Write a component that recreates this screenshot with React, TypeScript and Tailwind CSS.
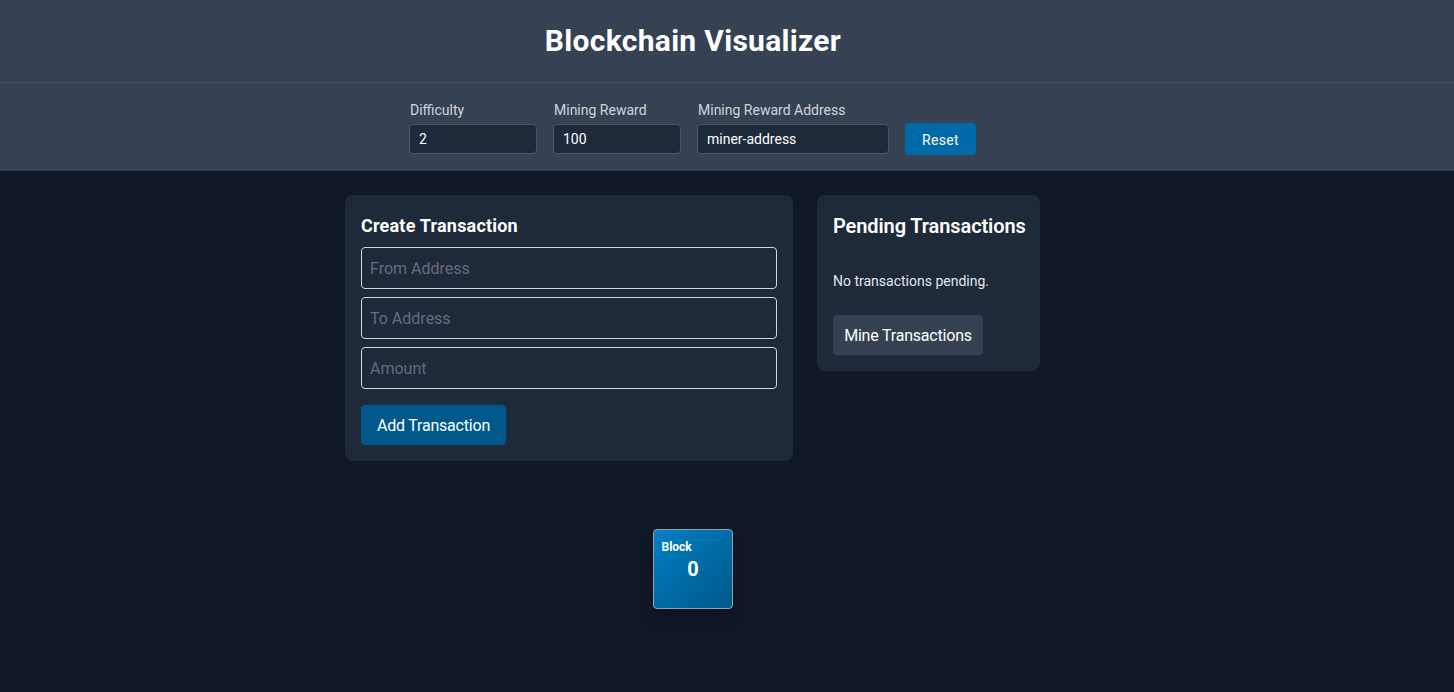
export default function App() {
  const font = "font-['Roboto','Noto_Sans',sans-serif]";
  return (
    <div className={`min-h-[692px] bg-gray-900 text-white ${font} overflow-hidden`}>
      <header className="bg-gray-700 border-b border-gray-600 h-[83px] w-full">
        <div className="w-[1386px] flex justify-center pt-[23px]">
          <h1 className="text-[30px] leading-9 font-bold tracking-[0.3px]">Blockchain Visualizer</h1>
        </div>
      </header>
      <div className="bg-gray-700 h-[88px] w-full">
        <div className="w-[1385px] flex justify-center items-end gap-4 pt-[17px]">
          <label className="flex flex-col gap-1 text-sm leading-5 text-gray-300">
            <span className="pl-px">Difficulty</span>
            <input readOnly value="2" className="w-32 h-[30px] px-[9px] text-sm text-white bg-gray-800 border border-gray-600 rounded-[4px] outline-none" />
          </label>
          <label className="flex flex-col gap-1 text-sm leading-5 text-gray-300">
            <span className="pl-px">Mining Reward</span>
            <input readOnly value="100" className="w-32 h-[30px] px-[9px] text-sm text-white bg-gray-800 border border-gray-600 rounded-[4px] outline-none" />
          </label>
          <label className="flex flex-col gap-1 text-sm leading-5 text-gray-300">
            <span className="pl-px">Mining Reward Address</span>
            <input readOnly value="miner-address" className="w-48 h-[30px] px-[9px] text-sm text-white bg-gray-800 border border-gray-600 rounded-[4px] outline-none" />
          </label>
          <button className="w-[71px] h-8 mb-[-1px] pt-px bg-sky-700 rounded-[4px] text-sm tracking-[0.3px] text-white">Reset</button>
        </div>
      </div>
      <main className="w-[1385px] flex flex-col items-center pt-6">
        <div className="flex items-start gap-6">
          <section className="w-[448px] bg-gray-800 rounded-lg p-4">
            <h2 className="text-lg leading-7 font-bold mb-2 pt-px h-7 tracking-[0.2px]">Create Transaction</h2>
            <div className="flex flex-col gap-2">
              {["From Address", "To Address", "Amount"].map((p) => (
                <input key={p} placeholder={p} className="w-full h-[42px] px-2 text-base bg-gray-800 border border-gray-300 rounded-[4px] outline-none placeholder:text-[#6b6a80]" />
              ))}
            </div>
            <button className="mt-4 w-[145px] h-10 pt-px bg-sky-800 rounded-[4px] text-base tracking-[-0.2px] text-white">Add Transaction</button>
          </section>
          <section className="w-[223px] bg-gray-800 rounded-lg p-4">
            <h2 className="text-xl leading-7 font-semibold whitespace-nowrap mt-px tracking-[-0.1px]">Pending Transactions</h2>
            <p className="text-sm leading-5 text-gray-200 mt-[31px]">No transactions pending.</p>
            <button className="mt-6 w-[150px] h-10 pt-px bg-gray-700 rounded-[4px] text-base tracking-[-0.2px] text-white">Mine Transactions</button>
          </section>
        </div>
        <div className="mt-[68px] w-20 h-20 px-2 pt-[9px] rounded-[4px] border border-gray-400 bg-gradient-to-br from-[#0a7fc4] to-sky-800 shadow-lg shadow-black/15">
          <div className="text-xs leading-4 font-bold">Block</div>
          <div className="text-xl leading-7 font-bold text-center pl-px">0</div>
        </div>
      </main>
    </div>
  );
}
